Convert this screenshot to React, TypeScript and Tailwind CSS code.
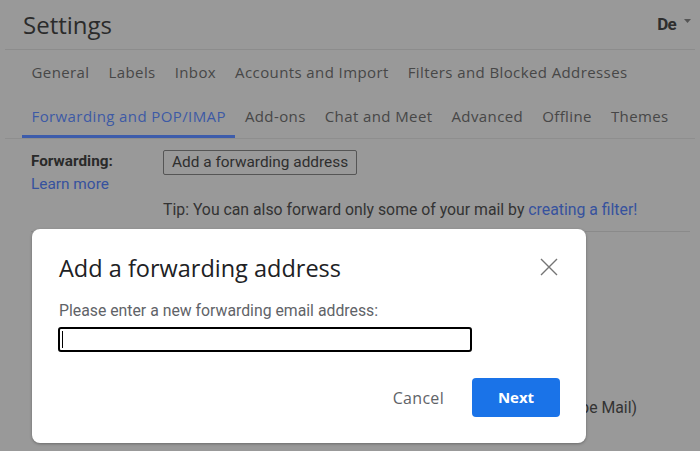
import React from "react";

const gs = { fontFamily: '"Open Sans", "Noto Sans", sans-serif' };
const rb = { fontFamily: 'Roboto, "Liberation Sans", sans-serif' };

export default function App() {
  const row1 = ["General", "Labels", "Inbox", "Accounts and Import", "Filters and Blocked Addresses"];
  const row2 = ["Forwarding and POP/IMAP", "Add-ons", "Chat and Meet", "Advanced", "Offline", "Themes"];
  return (
    <div className="relative w-[700px] h-[451px] overflow-hidden bg-[#999999]">
      {/* Header */}
      <div className="h-[50px] mx-[5px] border-b border-[#8c8c8c] flex items-center justify-between">
        <div className="pl-[18px] text-[24px] leading-[30px] text-[#2b2b2b] pt-[1px]" style={gs}>
          Settings
        </div>
        <div className="flex items-center pr-[4px]">
          <span className="text-[17px] font-bold text-[#2e2e2e] tracking-[-0.8px]" style={rb}>
            De
          </span>
          <svg width="7" height="4" viewBox="0 0 7 4" className="ml-[8px] mb-[8px]">
            <path d="M0 0 L7 0 L3.5 4 Z" fill="#555" />
          </svg>
        </div>
      </div>
      {/* Tabs */}
      <div className="mx-[5px] border-b border-[#8e8e8e]" style={gs}>
        <div className="flex pl-[17px] h-[44px] items-center">
          {row1.map((t) => (
            <div key={t} className="px-[9.5px] text-[15px] tracking-[0.4px] text-[#474747]">
              {t}
            </div>
          ))}
        </div>
        <div className="flex pl-[17px] h-[44px]">
          {row2.map((t, i) => (
            <div
              key={t}
              className={
                i === 0
                  ? "px-[9.5px] text-[15px] tracking-[0.4px] text-[#3d5aa5] flex items-center border-b-[3px] border-[#3d5cab] pt-[3px]"
                  : "px-[9.5px] text-[15px] tracking-[0.4px] text-[#474747] flex items-center"
              }
            >
              {t}
            </div>
          ))}
        </div>
      </div>
      {/* Content */}
      <div className="pl-[31px] pt-[11px] mr-[10px]" style={rb}>
        <div className="flex border-b border-[#8a8a8a] pb-[9px]">
          <div className="w-[132px] leading-[23px]">
            <div className="font-bold text-[#2a2a2a] text-[15.3px]">Forwarding:</div>
            <div className="text-[#36529e] text-[15.4px]">Learn more</div>
          </div>
          <div>
            <div className="inline-block border border-[#555] rounded-[2px] px-[8px] h-[25px] leading-[23px] text-[#2e2e2e] text-[15.4px]">
              Add a forwarding address
            </div>
            <div className="mt-[23px] text-[15.8px] leading-[24px] text-[#333]">
              Tip: You can also forward only some of your mail by{" "}
              <span className="text-[#36529e]">creating a filter!</span>
            </div>
          </div>
        </div>
        <div className="w-[606px] text-right mt-[164px] text-[15.8px] text-[#333]">
          3. Configure your email client (e.g. Outlook, Eudora, Netscape Mail)
        </div>
      </div>

      {/* Dialog */}
      <div className="absolute left-[32px] top-[229px] w-[554px] h-[214px] bg-white rounded-[8px] shadow-[0_1px_3px_rgba(0,0,0,0.3)] flex flex-col px-[26px] pt-[24px]">
        <div className="flex items-start justify-between">
          <div className="text-[23.5px] leading-[30px] text-[#202124] pl-[1px]" style={gs}>
            Add a forwarding address
          </div>
          <svg width="18" height="18" viewBox="0 0 18 18" className="mt-[5px] mr-[2px]">
            <path d="M1 1 L17 17 M17 1 L1 17" stroke="#757575" strokeWidth="1.4" />
          </svg>
        </div>
        <div className="mt-[18px] text-[15.8px] leading-[20px] text-[#5f6368] pl-[1px]" style={rb}>
          Please enter a new forwarding email address:
        </div>
        <div className="mt-[6px] w-[414px] h-[25px] border-2 border-black rounded-[3px] flex items-center pl-[2px]">
          <div className="w-[1px] h-[17px] bg-black" />
        </div>
        <div className="flex justify-end items-center mt-[26px] gap-[4px]">
          <div className="px-[24px] h-[39px] flex items-center text-[16px] tracking-[0.3px] font-medium text-[#5f6368]" style={gs}>
            Cancel
          </div>
          <div className="w-[88px] h-[39px] rounded-[4px] bg-[#1a73e8] text-white flex items-center justify-center text-[15px] font-bold" style={gs}>
            Next
          </div>
        </div>
      </div>
    </div>
  );
}
